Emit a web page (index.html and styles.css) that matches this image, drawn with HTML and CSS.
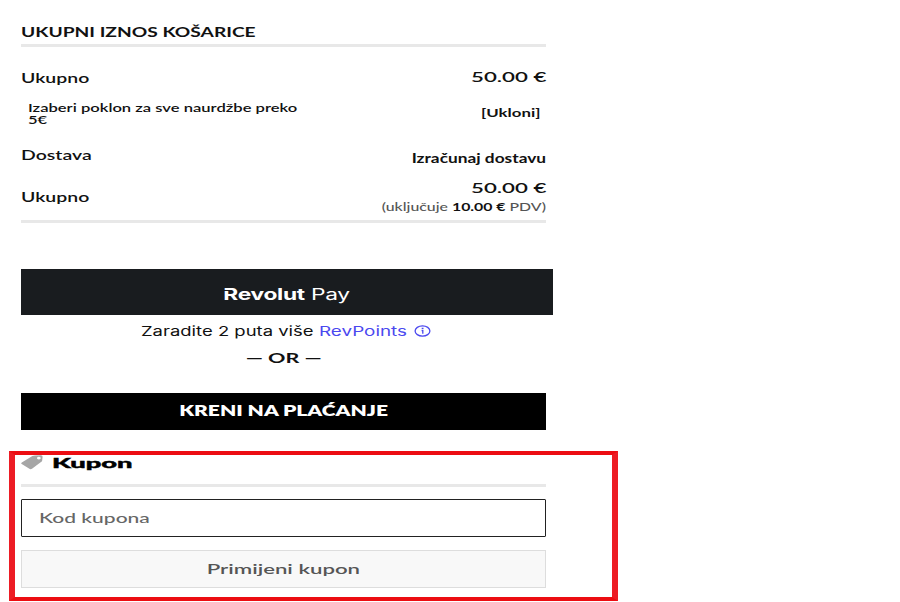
FILE: index.html
```html
<!DOCTYPE html>
<html lang="hr">
<head>
<meta charset="utf-8">
<title>Košarica</title>
<link rel="stylesheet" href="styles.css">
</head>
<body>
<main class="cart">
  <section class="totals">
    <h2 class="heading"><span class="t t-heading">UKUPNI IZNOS KOŠARICE</span></h2>
    <div class="row row-subtotal"><span class="t t-label">Ukupno</span><span class="t t-price">50.00 €</span></div>
    <div class="row row-gift">
      <span class="t t-gift">Izaberi poklon za sve naurdžbe preko<br>5€</span>
      <span class="t t-remove">[Ukloni]</span>
    </div>
    <div class="row row-shipping"><span class="t t-label">Dostava</span><span class="t t-calc">Izračunaj dostavu</span></div>
    <div class="row row-total">
      <span class="t t-label">Ukupno</span>
      <span class="sum"><span class="t t-price">50.00 €</span><span class="t t-tax">(uključuje <b>10.00 €</b> PDV)</span></span>
    </div>
  </section>
  <button class="revolut"><span class="t t-revolut"><b>Revolut</b> Pay</span></button>
  <div class="points">
    <span class="t t-points">Zaradite 2 puta više</span>
    <span class="t t-link">RevPoints</span>
    <svg class="info" viewBox="0 0 17 12" fill="none" stroke="#4b48ef"><ellipse cx="8.5" cy="6" rx="7.4" ry="5.1" stroke-width="1.3"/><path d="M7.6 5.5h1.2v3.2M7.7 3.3h1.8" stroke-width="1.3"/></svg>
  </div>
  <div class="or"><span class="t t-or">— OR —</span></div>
  <button class="checkout"><span class="t t-checkout">KRENI NA PLAĆANJE</span></button>
  <section class="coupon">
    <h3 class="coupon-title">
      <svg class="tag" viewBox="0 0 22 15"><path fill="#a6a6a6" fill-rule="evenodd" d="M.8 7.5 11.4 1Q12.5.4 14 .4L20 .2Q21.7.3 21.6 1.8L21.2 5.4Q21 6.4 20 7.1L11 13.7Q9.5 14.6 8 13.6L.7 9.1Q-.3 8.3.8 7.5ZM17.8 1.8a1.9 1.3 0 1 0 .1 0Z"/></svg>
      <span class="t t-kupon">Kupon</span>
    </h3>
    <div class="field"><span class="t t-placeholder">Kod kupona</span></div>
    <button class="apply"><span class="t t-apply">Primijeni kupon</span></button>
  </section>
</main>
</body>
</html>
```
FILE: styles.css
```css
* { box-sizing: border-box; }
body { margin: 0; background: #fff; color: #111; font-family: Lato, "Liberation Sans", sans-serif; overflow: hidden; }
h2, h3 { margin: 0; font-size: 14px; }
button { display: flex; justify-content: center; align-items: center; margin: 0; padding: 0; border: 0; font: inherit; }

.cart { width: 618px; height: 602px; }
.totals { width: 525px; margin-left: 21px; height: 223px; border-bottom: 3px solid #e8e8e8; }

/* Extended lettering: every label is widened from its own anchor edge. */
.t { display: inline-block; white-space: nowrap; line-height: 20px; font-size: 14px; transform: scaleX(1.4); transform-origin: left center; }

.heading { height: 47px; padding-top: 22px; border-bottom: 3px solid #e8e8e8; line-height: 20px; }
.row { display: flex; justify-content: space-between; align-items: center; }
.row-subtotal { height: 60px; }
.row-subtotal .t-label { padding-top: 2px; }
.row-gift { height: 13px; padding: 0 6px 0 7px; }
.row-shipping { height: 70px; }
.row-total { height: 13px; }
.sum { display: flex; flex-direction: column; align-items: flex-end; }

.t-heading { font-weight: 700; transform: scaleX(1.37); }
.t-label { font-weight: 600; transform: scaleX(1.39); }
.t-price, .t-remove, .t-calc, .t-tax { transform-origin: right center; }
.t-price { font-weight: 600; transform: scaleX(1.59); }
.t-gift { font-size: 12px; line-height: 12px; font-weight: 600; transform: scaleX(1.38); }
.t-remove { padding-bottom: 1px; font-size: 12px; font-weight: 700; }
.t-calc { padding-top: 5px; font-size: 13px; font-weight: 700; transform: scaleX(1.33); }
.t-tax { font-size: 11px; line-height: 18px; font-weight: 500; color: #555; transform: scaleX(1.44); }
.t-tax b { color: #111; }

.revolut { width: 532px; height: 46px; margin: 46px 0 0 21px; background: #191c1f; color: #fff; }
.t-revolut { padding-top: 3px; font-family: Inter, sans-serif; font-size: 16px; letter-spacing: -.2px; transform: scaleX(1.42); transform-origin: center; }
.t-revolut b { font-weight: 650; }
/* Notch between the top bar and the stem of the R. */
.t-revolut::before { content: ""; position: absolute; left: 0; top: 9px; width: 4px; height: 1px; background: #191c1f; }
.points { display: flex; align-items: center; height: 20px; margin: 6px 0 0 141px; font-family: Inter, sans-serif; }
.t-points { width: 178px; font-size: 13px; transform: scaleX(1.42); }
.t-link { width: 95px; font-size: 13px; color: #4b48ef; transform: scaleX(1.45); }
.info { width: 17px; height: 12px; }
.or { width: 526px; height: 20px; margin: 6px 0 0 21px; text-align: center; }
.t-or { font-weight: 700; transform: scaleX(1.54); transform-origin: center; }
.checkout { width: 525px; height: 37px; margin: 26px 0 0 21px; background: #000; color: #fff; }
.t-checkout { padding-bottom: 1px; font-weight: 800; transform: scaleX(1.5); transform-origin: center; }

.coupon { width: 609px; height: 150px; margin: 21px 0 0 9px; border: solid #ed1c24; border-width: 4px 6px; border-top-color: #ec0d12; border-bottom-color: #ec0d12; padding-left: 6px; }
.coupon-title { display: flex; align-items: flex-start; width: 525px; height: 32px; border-bottom: 3px solid #e8e8e8; }
.tag { width: 22px; height: 15px; margin-right: 9px; }
.t-kupon { font-weight: 900; line-height: 16px; color: #000; transform: scaleX(1.95); -webkit-text-stroke: .4px #000; }
.field { display: flex; align-items: center; width: 525px; height: 38px; margin-top: 12px; padding-left: 17px; border: 1.5px solid #222; border-radius: 1px; }
.t-placeholder { color: #666; font-weight: 500; transform: scaleX(1.5); }
.apply { width: 525px; height: 38px; margin-top: 13px; border: 1px solid #ddd; background: #f8f8f8; color: #555; }
.t-apply { font-weight: 600; transform: scaleX(1.585); transform-origin: center; }
```
